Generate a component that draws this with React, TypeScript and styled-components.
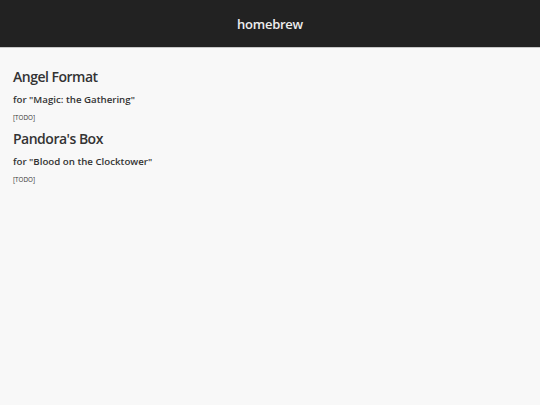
import * as React from 'react';
import styled, { createGlobalStyle } from 'styled-components';

const GlobalStyle = createGlobalStyle`
  html, body {
    margin: 0;
    padding: 0;
    background: #f8f8f8;
    font-family: 'Open Sans', 'DejaVu Sans', sans-serif;
    color: #333;
  }
`;

const Header = styled.header`
  height: 47px;
  background: #222222;
  border-bottom: 1px solid #c8c8c8;
  display: flex;
  align-items: center;
  justify-content: center;
`;

const Title = styled.h1`
  margin: 0;
  color: #eeeeee;
  font-size: 13px;
  font-weight: 600;
  letter-spacing: -0.25px;
`;

const Main = styled.main`
  padding: 19px 13px;
  display: flex;
  flex-direction: column;
`;

const Project = styled.section`
  display: flex;
  flex-direction: column;
`;

const Name = styled.h2`
  margin: 0;
  font-size: 14px;
  font-weight: 600;
  line-height: 20px;
  letter-spacing: -0.5px;
  color: #333;
`;

const Subtitle = styled.h3`
  margin: 0;
  padding-top: 6px;
  font-size: 9.7px;
  font-weight: 600;
  line-height: 14px;
  color: #333;
`;

const Note = styled.p`
  margin: 0;
  padding: 6px 0 6px;
  font-size: 6.3px;
  line-height: 10px;
  color: #333;
`;

type ProjectInfo = {
  name: string;
  game: string;
};

const projects: ProjectInfo[] = [
  { name: 'Angel Format', game: 'Magic: the Gathering' },
  { name: "Pandora's Box", game: 'Blood on the Clocktower' },
];

const App = () => (
  <>
    <GlobalStyle />
    <Header>
      <Title>homebrew</Title>
    </Header>
    <Main>
      {projects.map((p) => (
        <Project key={p.name}>
          <Name>{p.name}</Name>
          <Subtitle>for "{p.game}"</Subtitle>
          <Note>[TODO]</Note>
        </Project>
      ))}
    </Main>
  </>
);

export default App;
